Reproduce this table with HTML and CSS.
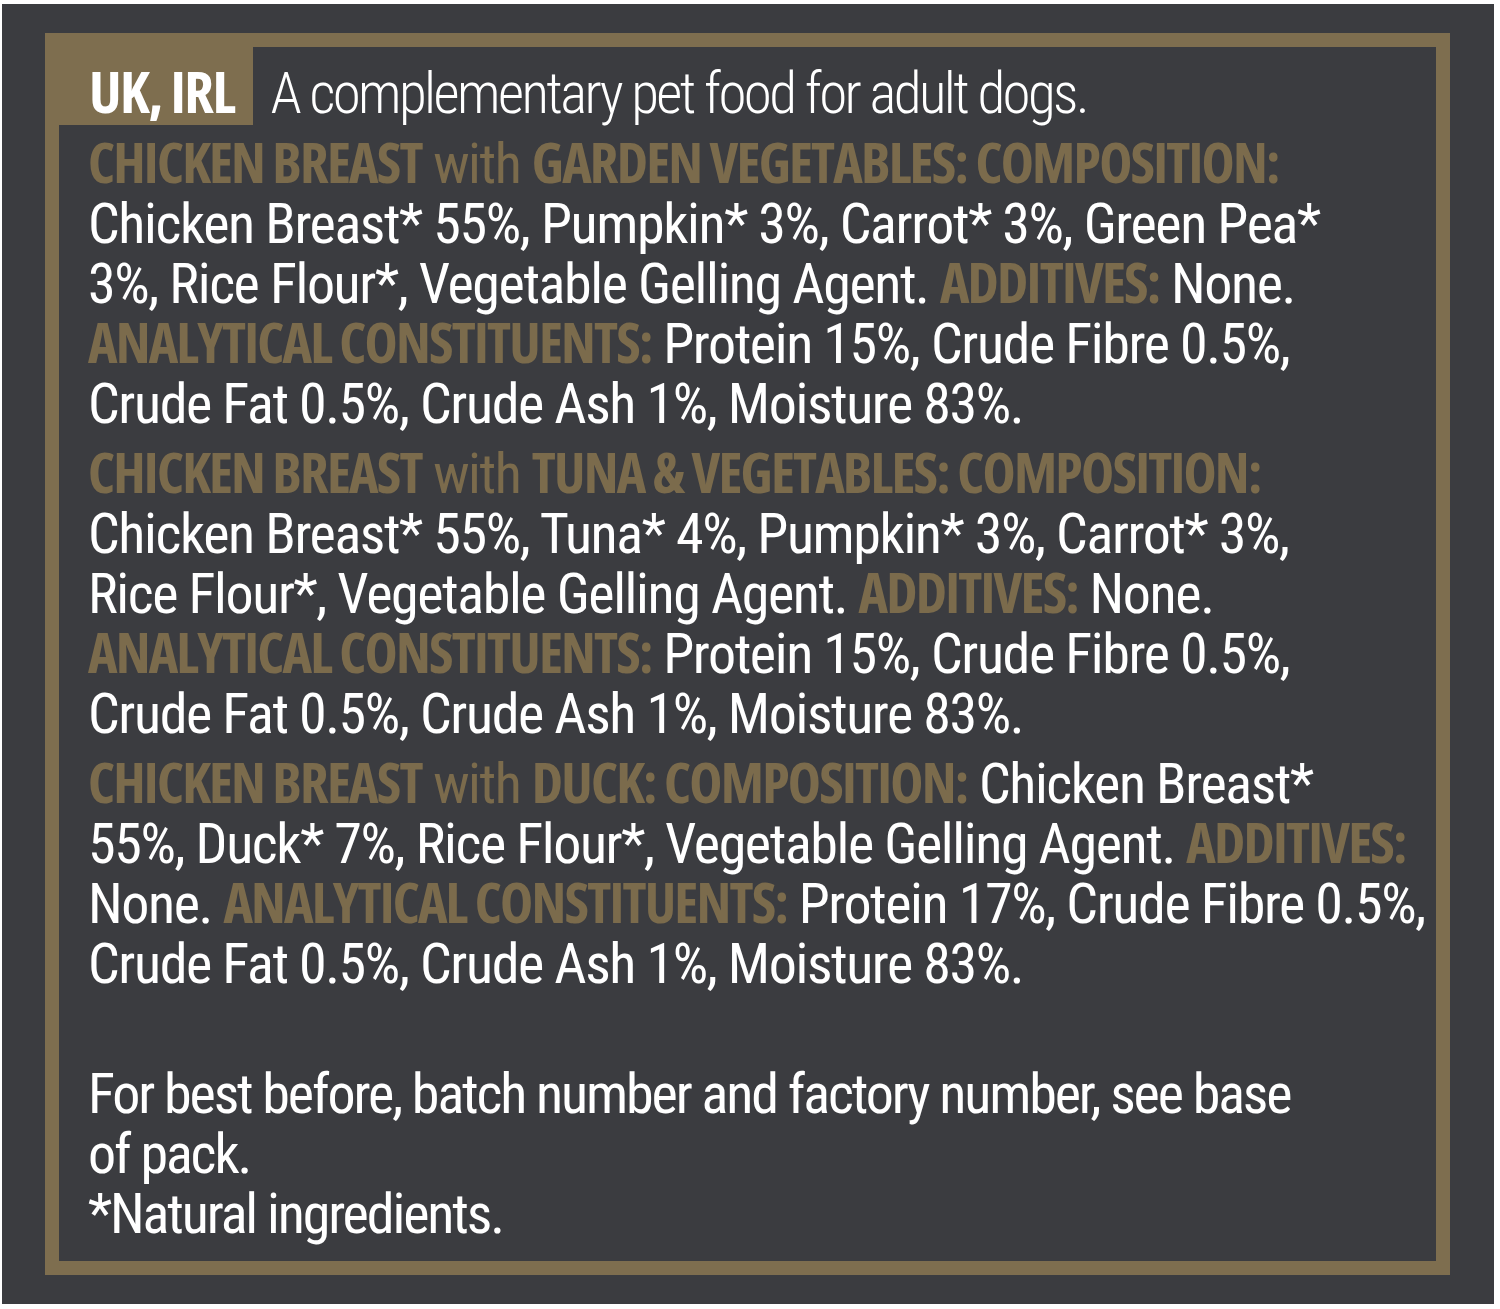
FILE: index.html
```html
<!DOCTYPE html>
<html lang="en">
<head>
<meta charset="utf-8">
<title>UK, IRL – Composition</title>
<link rel="stylesheet" href="styles.css">
</head>
<body>
<div class="panel">
  <div class="frame">
    <div class="header">
      <div class="tab">UK, IRL</div>
      <div class="intro">A complementary pet food for adult dogs.</div>
    </div>
    <div class="content">
      <p class="para">
        <span class="k">CHICKEN BREAST</span> <span class="w">with</span> <span class="k">GARDEN VEGETABLES: COMPOSITION:</span><br>
        Chicken Breast* 55%, Pumpkin* 3%, Carrot* 3%, Green Pea*<br>
        3%, Rice Flour*, Vegetable Gelling Agent. <span class="k">ADDITIVES:</span> None.<br>
        <span class="k">ANALYTICAL CONSTITUENTS:</span> Protein 15%, Crude Fibre 0.5%,<br>
        Crude Fat 0.5%, Crude Ash 1%, Moisture 83%.
      </p>
      <p class="para">
        <span class="k">CHICKEN BREAST</span> <span class="w">with</span> <span class="k">TUNA &amp; VEGETABLES: COMPOSITION:</span><br>
        Chicken Breast* 55%, Tuna* 4%, Pumpkin* 3%, Carrot* 3%,<br>
        Rice Flour*, Vegetable Gelling Agent. <span class="k">ADDITIVES:</span> None.<br>
        <span class="k">ANALYTICAL CONSTITUENTS:</span> Protein 15%, Crude Fibre 0.5%,<br>
        Crude Fat 0.5%, Crude Ash 1%, Moisture 83%.
      </p>
      <p class="para">
        <span class="k">CHICKEN BREAST</span> <span class="w">with</span> <span class="k">DUCK: COMPOSITION:</span> Chicken Breast*<br>
        55%, Duck* 7%, Rice Flour*, Vegetable Gelling Agent. <span class="k">ADDITIVES:</span><br>
        None. <span class="k">ANALYTICAL CONSTITUENTS:</span> Protein 17%, Crude Fibre 0.5%,<br>
        Crude Fat 0.5%, Crude Ash 1%, Moisture 83%.
      </p>
      <p class="para footer">
        For best before, batch number and factory number, see base<br>
        of pack.<br>
        *Natural ingredients.
      </p>
    </div>
  </div>
</div>
</body>
</html>
```
FILE: styles.css
```css
html, body {
  margin: 0;
  padding: 0;
  background: #ffffff;
}

body {
  padding: 4px 6px 5px 2px;
  font-family: "Roboto Condensed", "Liberation Sans Narrow", sans-serif;
  color: #ffffff;
}

.panel {
  height: 1300px;
  box-sizing: border-box;
  background: #3b3c40;
  padding: 29px 44px 29px 43px;
  display: flex;
}

.frame {
  flex: 1;
  min-width: 0;
  border: 14px solid #7e6e4f;
  display: flex;
  flex-direction: column;
  overflow: hidden;
}

.header {
  display: flex;
  align-items: flex-end;
  font-size: 57px;
  line-height: 60px;
}

.tab {
  background: #7e6e4f;
  padding: 14px 18px 4px 30px;
  white-space: nowrap;
  font-family: "Open Sans", "Roboto Condensed", sans-serif;
  font-stretch: 75%;
  font-weight: 700;
  font-size: 58px;
  letter-spacing: -1.5px;
}

.intro {
  padding: 0 0 1px 18px;
  font-weight: 300;
  letter-spacing: -2.6px;
  white-space: nowrap;
}

.content {
  padding: 9px 0 0 29px;
}

.para {
  margin: 0;
  font-size: 56px;
  line-height: 60px;
  letter-spacing: -1.4px;
  white-space: nowrap;
}

.para + .para {
  margin-top: 10px;
}

.para.footer {
  margin-top: 70px;
  letter-spacing: -2.1px;
}

.k {
  color: #7b6b4c;
  font-family: "Open Sans", "Roboto Condensed", sans-serif;
  font-stretch: 75%;
  font-weight: 700;
  font-size: 56px;
  line-height: 0;
  letter-spacing: -1.8px;
}

.w {
  color: #7b6b4c;
}
```
